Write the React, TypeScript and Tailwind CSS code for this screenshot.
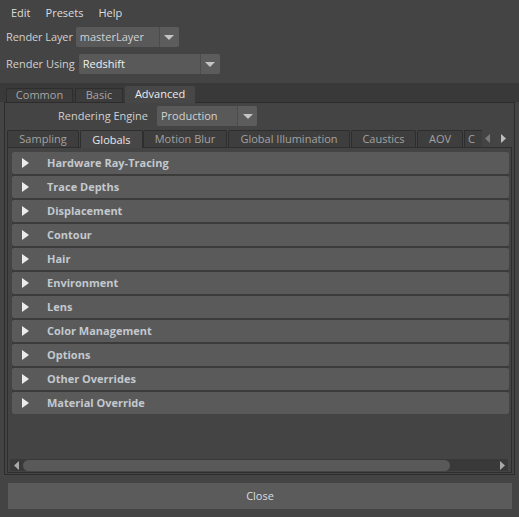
import React from "react";

const Caret = () => (
  <svg width="10" height="5" viewBox="0 0 10 5">
    <path d="M0 0H10L5 5Z" fill="#c4c4c4" />
  </svg>
);

function Combo({ text, className, bright }: { text: string; className: string; bright?: boolean }) {
  return (
    <div className={"flex h-[20px] rounded-[2px] overflow-hidden bg-[#4c4c4c] gap-[1px] " + className}>
      <div className={"flex-1 bg-[#595959] flex items-center pl-[4px] " + (bright ? "text-[#f0f0f0]" : "text-[#d2d2d2]")}>
        {text}
      </div>
      <div className="w-[19px] bg-[#5c5c5c] flex items-center justify-center">
        <Caret />
      </div>
    </div>
  );
}

const Tri = () => (
  <svg width="7" height="10" viewBox="0 0 7 10">
    <path d="M0 0L7 5L0 10Z" fill="#ececec" />
  </svg>
);

const sections = [
  "Hardware Ray-Tracing",
  "Trace Depths",
  "Displacement",
  "Contour",
  "Hair",
  "Environment",
  "Lens",
  "Color Management",
  "Options",
  "Other Overrides",
  "Material Override",
];

const subTabs: { label: string; w: string; sel?: boolean }[] = [
  { label: "Sampling", w: "w-[72px]" },
  { label: "Globals", w: "w-[63px]", sel: true },
  { label: "Motion Blur", w: "w-[84px]" },
  { label: "Global Illumination", w: "w-[122px]" },
  { label: "Caustics", w: "w-[65px]" },
  { label: "AOV", w: "w-[46px]" },
];

export default function App() {
  return (
    <div className="w-[519px] h-[517px] bg-[#444444] text-[#d8d8d8] text-[11px] font-['Open_Sans',sans-serif] flex flex-col overflow-hidden">
      {/* menu */}
      <div className="h-[26px] flex items-center pl-[11px] gap-[15px] text-[#dcdcdc]">
        <span>Edit</span>
        <span>Presets</span>
        <span>Help</span>
      </div>

      <div className="flex items-center h-[20px] mt-[1px] pl-[6px] gap-[3px]">
        <span className="text-[#d0d0d0] tracking-[-0.1px]">Render Layer</span>
        <Combo text="masterLayer" className="w-[103px]" />
      </div>

      <div className="flex items-center h-[20px] mt-[7px] pl-[6px] gap-[4px]">
        <span className="text-[#d0d0d0]">Render Using</span>
        <Combo text="Redshift" className="w-[141px]" bright />
      </div>

      {/* top tabs strip */}
      <div className="mt-[9px] h-[19px] bg-[#393939] flex items-end pl-[6px] gap-[2px]">
        <div className="w-[67px] h-[14px] border border-b-0 border-[#2e2e2e] bg-[#3c3c3c] text-[#a6a6a6] flex items-center justify-center rounded-t-[2px]">
          Common
        </div>
        <div className="w-[48px] h-[14px] border border-b-0 border-[#2e2e2e] bg-[#3c3c3c] text-[#a6a6a6] flex items-center justify-center rounded-t-[2px]">
          Basic
        </div>
        <div className="w-[70px] h-[17px] -mb-[1px] relative z-10 bg-[#474747] text-[#ececec] flex items-center justify-center rounded-t-[2px]">
          Advanced
        </div>
      </div>

      {/* outer panel */}
      <div className="ml-[4px] w-[511px] h-[373px] border border-[#2c2c2c] bg-[#444444] flex flex-col">
        <div className="flex items-center mt-[3px] h-[20px]">
          <span className="w-[143px] text-right text-[#d0d0d0]">Rendering Engine</span>
          <Combo text="Production" className="ml-[9px] w-[100px]" />
        </div>

        {/* sub tabs */}
        <div className="mt-[4px] ml-[2px] h-[17px] flex items-end relative">
          {subTabs.map((t) =>
            t.sel ? (
              <div
                key={t.label}
                className={t.w + " h-[18px] -mb-[1px] pt-[1px] relative z-10 bg-[#474747] text-[#e8e8e8] flex items-center justify-center border-x border-t border-[#2e2e2e] rounded-t-[2px]"}
              >
                {t.label}
              </div>
            ) : (
              <div
                key={t.label}
                className={t.w + " h-[17px] pt-[1px] bg-[#3e3e3e] text-[#a2a2a2] flex items-center justify-center border-x border-t border-[#2e2e2e] rounded-t-[2px] mr-[1px]"}
              >
                {t.label}
              </div>
            )
          )}
          <div className="w-[18px] h-[17px] pt-[1px] bg-[#3e3e3e] text-[#a2a2a2] border-l border-t border-[#2e2e2e] pl-[3px] flex items-center">
            C
          </div>
          <div className="flex-1 h-[17px] bg-[#444444] flex items-center gap-[11px] pl-[3px]">
            <svg width="5" height="9" viewBox="0 0 5 9">
              <path d="M5 0V9L0 4.5Z" fill="#7a7a7a" />
            </svg>
            <svg width="5" height="9" viewBox="0 0 5 9">
              <path d="M0 0V9L5 4.5Z" fill="#bdbdbd" />
            </svg>
          </div>
        </div>

        {/* inner panel */}
        <div className="ml-[2px] w-[505px] h-[326px] border border-[#2e2e2e] bg-[#444444] flex flex-col">
          <div className="mt-[4px] ml-[4px] w-[497px] flex flex-col gap-[2px] bg-[#3b3b3b]">
            {sections.map((s) => (
              <div key={s} className="h-[22px] bg-[#5a5a5a] rounded-[2px] flex items-center">
                <div className="w-[35px] pl-[10px] flex items-center">
                  <Tri />
                </div>
                <span className="font-bold text-[#c3c9ce] text-[11px]">{s}</span>
              </div>
            ))}
          </div>

          {/* horizontal scrollbar */}
          <div className="mt-auto mb-[1px] ml-[2px] w-[498px] h-[12px] bg-[#393939] flex items-center">
            <div className="w-[12px] flex items-center justify-center">
              <svg width="5" height="9" viewBox="0 0 5 9">
                <path d="M5 0V9L0 4.5Z" fill="#a8a8a8" />
              </svg>
            </div>
            <div className="ml-[1px] w-[427px] h-[11px] bg-[#595959] rounded-full" />
            <div className="flex-1 flex justify-end pr-[3px]">
              <svg width="5" height="9" viewBox="0 0 5 9">
                <path d="M0 0V9L5 4.5Z" fill="#a8a8a8" />
              </svg>
            </div>
          </div>
        </div>
      </div>

      {/* close */}
      <div className="mt-[8px] ml-[8px] w-[504px] h-[26px] bg-[#5b5b5b] flex items-center justify-center text-[#dcdcdc]">
        Close
      </div>
    </div>
  );
}
